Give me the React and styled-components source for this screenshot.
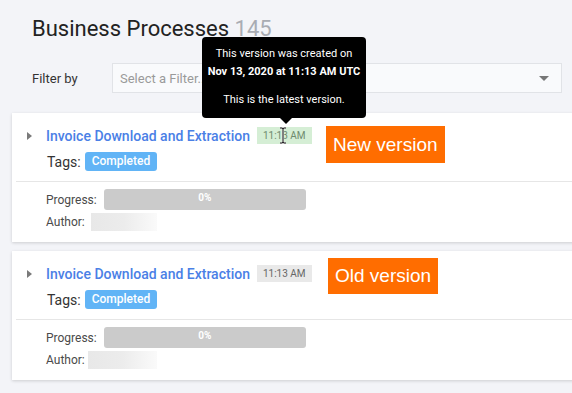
import React from "react";
import styled, { createGlobalStyle } from "styled-components";

const Global = createGlobalStyle`
  html, body { margin: 0; padding: 0; }
  body {
    background: #f3f4f8;
    font-family: Roboto, "Liberation Sans", Arial, sans-serif;
    overflow: hidden;
    width: 572px;
    height: 393px;
  }
`;

const Page = styled.div`
  position: relative;
  display: flex;
  flex-direction: column;
  padding-top: 16px;
`;

const Title = styled.h1`
  margin: 0 0 0 32px;
  font-size: 22px;
  line-height: 26px;
  font-weight: 400;
  color: #222;
`;

const Count = styled.span`
  color: #a9acb3;
`;

const FilterRow = styled.div`
  display: flex;
  align-items: center;
  margin: 21px 10px 0 32px;
`;

const FilterLabel = styled.span`
  width: 80px;
  font-size: 13px;
  color: #333;
`;

const Select = styled.div`
  flex: 1;
  height: 28px;
  display: flex;
  align-items: center;
  justify-content: space-between;
  padding: 0 12px 0 7px;
  background: #f9fafc;
  border: 1px solid #e1e3e7;
  font-size: 13px;
  color: #9a9a9a;
`;

const Caret = styled.span`
  width: 0;
  height: 0;
  border-left: 5px solid transparent;
  border-right: 5px solid transparent;
  border-top: 5px solid #777;
`;

const List = styled.div`
  display: flex;
  flex-direction: column;
  gap: 9px;
  margin: 20px -20px 0 12px;
`;

const Card = styled.div`
  position: relative;
  background: #fff;
  box-shadow: 0 1px 3px rgba(0, 0, 0, 0.16);
`;

const CardHead = styled.div`
  display: flex;
  flex-direction: column;
  gap: 8px;
  padding: 14px 0 10px 11px;
  border-bottom: 1px solid #e6e6e6;
  margin-left: 4px;
`;

const TitleRow = styled.div`
  display: flex;
  align-items: center;
  height: 17px;
`;

const Arrow = styled.span`
  width: 0;
  height: 0;
  border-top: 4px solid transparent;
  border-bottom: 4px solid transparent;
  border-left: 5px solid #7a7a7a;
  margin-right: 14px;
`;

const ProcName = styled.a`
  font-size: 14px;
  color: #4a80e6;
  text-decoration: none;
  font-weight: 500;
`;

const Time = styled.span`
  margin-left: 7px;
  height: 17px;
  line-height: 17px;
  padding: 0 6px;
  font-size: 10px;
  color: ${(p) => (p.$latest ? "#6e8a6e" : "#666")};
  background: ${(p) => (p.$latest ? "#d5eed5" : "#e9e9e9")};
`;

const TagRow = styled.div`
  display: flex;
  align-items: center;
  gap: 4px;
  padding-left: 20px;
  font-size: 14px;
  color: #333;
`;

const Tag = styled.span`
  height: 19px;
  line-height: 19px;
  padding: 0 7px;
  border-radius: 3px;
  background: #61b4f6;
  color: #fff;
  font-size: 12px;
  font-weight: 500;
`;

const CardBody = styled.div`
  display: flex;
  flex-direction: column;
  gap: 3px;
  padding: 7px 0 11px 34px;
`;

const InfoRow = styled.div`
  display: flex;
  align-items: center;
  gap: ${(p) => p.$gap}px;
  font-size: 12px;
  color: #4a4a4a;
`;

const Bar = styled.div`
  width: 202px;
  height: 21px;
  border-radius: 3px;
  background: #cbcbcb;
  color: #fff;
  font-size: 10px;
  font-weight: 700;
  text-align: center;
  line-height: 18px;
`;

const Blur = styled.div`
  width: ${(p) => p.$w}px;
  height: 18px;
  background: linear-gradient(90deg, #e8e8e8 0%, #ececec 50%, #fafafa 100%);
`;

const Note = styled.div`
  position: absolute;
  left: ${(p) => p.$left}px;
  top: ${(p) => p.$top}px;
  padding: 0 7px;
  height: ${(p) => p.$h}px;
  line-height: ${(p) => p.$h}px;
  background: #ff6d00;
  color: #fff;
  font-family: "Liberation Sans", Arial, sans-serif;
  font-size: 19px;
`;

const Tooltip = styled.div`
  position: absolute;
  left: 202px;
  top: 37px;
  width: 164px;
  padding: 8px 0 9px;
  background: #000;
  border-radius: 4px;
  color: #fff;
  font-size: 11px;
  text-align: center;
  &::after {
    content: "";
    position: absolute;
    left: 78px;
    bottom: -6px;
    border-left: 6px solid transparent;
    border-right: 6px solid transparent;
    border-top: 6px solid #000;
  }
`;

const TipLine = styled.div`
  line-height: 18px;
  font-weight: ${(p) => (p.$bold ? 700 : 400)};
  margin-top: ${(p) => p.$mt || 0}px;
`;

const Cursor = styled.svg`
  position: absolute;
  left: 279px;
  top: 127px;
`;

function Process({ latest, authorW, note }) {
  return (
    <Card>
      <CardHead>
        <TitleRow>
          <Arrow />
          <ProcName>Invoice Download and Extraction</ProcName>
          <Time $latest={latest}>11:13 AM</Time>
        </TitleRow>
        <TagRow>
          Tags: <Tag>Completed</Tag>
        </TagRow>
      </CardHead>
      <CardBody>
        <InfoRow $gap={7}>
          Progress: <Bar>0%</Bar>
        </InfoRow>
        <InfoRow $gap={authorW === 66 ? 6 : 3}>
          Author: <Blur $w={authorW} />
        </InfoRow>
      </CardBody>
      {note}
    </Card>
  );
}

export default function App() {
  return (
    <>
      <Global />
      <Page>
        <Title>
          Business Processes <Count>145</Count>
        </Title>
        <FilterRow>
          <FilterLabel>Filter by</FilterLabel>
          <Select>
            Select a Filter...
            <Caret />
          </Select>
        </FilterRow>
        <List>
          <Process
            latest
            authorW={66}
            note={
              <Note $left={314} $top={13} $h={37}>
                New version
              </Note>
            }
          />
          <Process
            authorW={69}
            note={
              <Note $left={316} $top={7} $h={36}>
                Old version
              </Note>
            }
          />
        </List>
        <Tooltip>
          <TipLine>This version was created on</TipLine>
          <TipLine $bold>Nov 13, 2020 at 11:13 AM UTC</TipLine>
          <TipLine $mt={10}>This is the latest version.</TipLine>
        </Tooltip>
        <Cursor width="8" height="17" viewBox="0 0 8 17">
          <path
            d="M1 1h2.5L4 2l0.5-1H7M4 2v13M1 16h2.5L4 15l0.5 1H7"
            stroke="#fff"
            strokeWidth="2.2"
            fill="none"
          />
          <path
            d="M1 1h2.5L4 2l0.5-1H7M4 2v13M1 16h2.5L4 15l0.5 1H7"
            stroke="#000"
            strokeWidth="1"
            fill="none"
          />
        </Cursor>
      </Page>
    </>
  );
}
